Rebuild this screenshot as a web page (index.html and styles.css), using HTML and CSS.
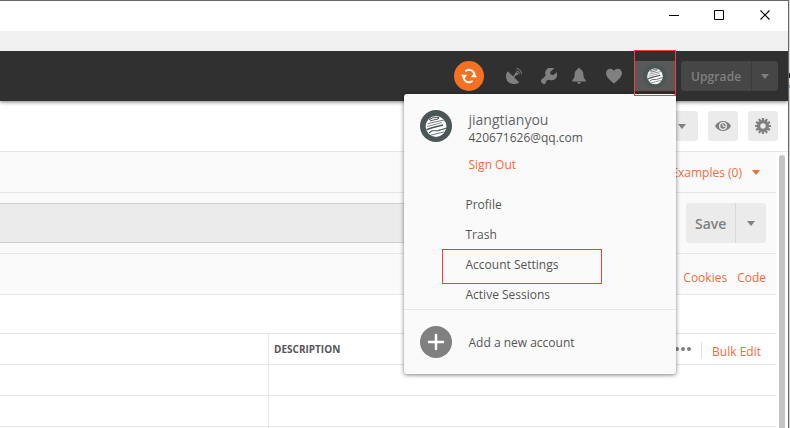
FILE: index.html
```html
<!DOCTYPE html>
<html lang="en">
<head>
<meta charset="utf-8">
<title>Account menu</title>
<link rel="stylesheet" href="styles.css">
</head>
<body>
<svg class="defs" aria-hidden="true">
  <symbol id="globe" viewBox="0 0 32 32">
    <circle cx="16" cy="16" r="16" fill="#4b5756"/>
    <circle cx="16" cy="16.5" r="10.4" fill="#fff"/>
    <g fill="none" stroke="#4b5756">
      <path d="M9 9.800 13 7.700 19 7.500 18 9 10 10.800" stroke-width="1"/>
      <path d="M7.500 13.600 24 10" stroke-width=".8"/>
      <path d="M6.500 19.800 12 17.800 23 15" stroke-width="1.600"/>
      <path d="M9 23 12 20.800 18 20.600 26 18.200" stroke-width="1.100"/>
      <path d="M11 25 24 22" stroke-width=".8"/>
      <path d="M7 16.500 22 12.500" stroke-width=".7"/>
    </g>
  </symbol>
</svg>
<div class="window">
  <div class="titlebar">
    <svg width="11" height="11"><path d="M0 5.500h10" stroke="#000"/></svg>
    <svg width="11" height="11"><path d="M.5.5h9v9h-9z" fill="none" stroke="#000"/></svg>
    <svg width="11" height="11"><path d="M.5.5l9 9M9.500.5l-9 9" stroke="#000" stroke-width="1.100"/></svg>
  </div>
  <div class="menubar"></div>
  <header class="header">
    <span class="sync">
      <svg width="16" height="16" viewBox="0 0 16 16"><g fill="none" stroke="#fff" stroke-width="1.900"><path d="M4.300 3.200A6 6 0 0 1 11.600 3.100M13.300 6 13 9"/><path d="M11.700 12.800A6 6 0 0 1 4.400 12.900M2.700 10 3 7"/><path d="M11.400 3A6 6 0 0 1 13.600 6.500M4.600 13A6 6 0 0 1 2.400 9.500"/></g><path d="M9.800 9.200h6.200l-3-4.200zM0 6.800h6.200l-3.200 4.200z" fill="#fff"/></svg>
    </span>
    <svg class="icon dish" width="16" height="16" viewBox="0 0 16 16"><path d="M1.700 3.200 13.300 14.400C8.500 17.200 3 16 1 12.600-.5 9.500-.2 5.800 1.700 3.200z" fill="#808080"/><path d="M7 9.500 10.500 5.600" stroke="#808080" stroke-width="1.500"/><circle cx="10.500" cy="5.700" r="1.500" fill="#808080"/><path d="M10.300 2.900a3 3 0 0 1 3 3.300M10.500.6a5 5 0 0 1 4.900 5.500" fill="none" stroke="#808080" stroke-width="1"/></svg>
    <svg class="icon wrench" width="16" height="16" viewBox="0 0 16 16"><path d="M13.200.6A5.600 5.600 0 0 0 4.800 7.500L.6 11.400a2 2 0 0 0 0 3l1 1a2 2 0 0 0 2.900 0l1-2.800 2.700-.9A5.600 5.600 0 0 0 15.700 4.300l-3.200 2.700-2.800-.5-.6-2.500z" fill="#808080"/></svg>
    <svg class="icon bell" width="14" height="16" viewBox="0 0 14 16"><path d="M7 0c1 0 1.300.6 1.300 1.300C10.500 2 11.300 4 11.400 6.500c.1 3 .8 4.400 2.300 5.500v1.500H.3V12c1.500-1.100 2.200-2.500 2.300-5.500C2.700 4 3.500 2 5.700 1.300 5.700.6 6 0 7 0zM5.300 14h3.400c0 2.500-3.400 2.500-3.400 0z" fill="#808080"/></svg>
    <svg class="icon heart" width="16" height="16" viewBox="0 0 16 16"><path d="M8 15.500C4 11.900 0 8.800 0 5.200 0 .6 5.700-.7 8 3c2.300-3.700 8-2.400 8 2.200 0 3.600-4 6.700-8 10.300z" fill="#808080"/></svg>
    <span class="avatar-button"><svg width="24" height="24"><use href="#globe"/></svg></span>
    <span class="upgrade"><span class="upgrade-label">Upgrade</span><span class="upgrade-more"><i class="caret"></i></span></span>
  </header>
  <div class="body">
    <div class="toolbar">
      <span class="tool select"><i class="caret"></i></span>
      <span class="tool"><svg width="16" height="12" viewBox="0 0 16 12"><path d="M0 6C3.500-.8 12.500-.8 16 6 12.500 12.800 3.500 12.800 0 6z" fill="#808080"/><circle cx="8" cy="6" r="4" fill="#ebebeb"/><circle cx="8" cy="6" r="2.700" fill="#808080"/><path d="M8 3.600v2.800h2.400" fill="none" stroke="#ebebeb" stroke-width="1"/></svg></span>
      <span class="tool"><svg width="16" height="16" viewBox="-8 -8 16 16"><circle r="4.400" fill="none" stroke="#808080" stroke-width="3.400"/><g stroke="#808080" stroke-width="2.200"><path d="M0-8v3M0 8V5M-8 0h3M8 0H5"/><path d="M0-8v3M0 8V5M-8 0h3M8 0H5" transform="rotate(30)"/><path d="M0-8v3M0 8V5M-8 0h3M8 0H5" transform="rotate(60)"/></g></svg></span>
    </div>
    <div class="content">
      <div class="row examples orange"><span>Examples (0)</span><i class="caret"></i></div>
      <div class="row request"><div class="url"></div><div class="save"><span class="save-label">Save</span><span class="save-more"><i class="caret"></i></span></div></div>
      <div class="row links orange"><span>Cookies</span><span>Code</span></div>
      <div class="gap"></div>
      <div class="table">
        <div class="cell"></div>
        <div class="cell heading"><span class="description">DESCRIPTION</span><span class="dots"><i></i><i></i><i></i></span><span class="bulk orange">Bulk Edit</span></div>
        <div class="cell"></div><div class="cell"></div>
        <div class="cell"></div><div class="cell"></div>
        <div class="cell"></div><div class="cell"></div>
      </div>
    </div>
    <div class="scrollbar"></div>
  </div>
</div>
<div class="popup">
  <div class="account">
    <svg width="32" height="32"><use href="#globe"/></svg>
    <div class="details"><div class="name">jiangtianyou</div><div class="email">420671626@qq.com</div><div class="signout orange">Sign Out</div></div>
  </div>
  <div class="items"><div class="profile">Profile</div><div class="trash">Trash</div><div class="settings">Account Settings</div><div class="sessions">Active Sessions</div></div>
  <div class="add"><svg width="32" height="32"><circle cx="16" cy="16" r="16" fill="#808080"/><path d="M16 9v14M9 16h14" stroke="#fff" stroke-width="2.500" stroke-linecap="round"/></svg><span class="add-label">Add a new account</span></div>
</div>
<div class="mark mark-avatar"></div>
<div class="mark mark-settings"></div>
</body>
</html>
```
FILE: styles.css
```css
* { box-sizing: border-box; }
body {
  margin: 0;
  width: 790px;
  height: 428px;
  overflow: hidden;
  position: relative;
  background: linear-gradient(#d8d8d8 73px, #222 73px, #222 78px, #d8d8d8 78px, #d8d8d8 85px, #8c90a8 85px, #8c90a8 88px, #d0d0d0 88px);
  font: 12px/18px "Open Sans", "Noto Sans", sans-serif;
  color: #555;
}
svg { display: block; flex: none; }
.defs { position: absolute; width: 0; height: 0; }
.orange { color: #f26b3a; }

.window {
  isolation: isolate;
  width: 789px;
  height: 428px;
  display: flex;
  flex-direction: column;
  overflow: hidden;
  background: #fff;
  border-top: 1px solid #686868;
  border-right: 1px solid #686868;
}
.titlebar {
  flex: none;
  height: 30px;
  display: flex;
  justify-content: flex-end;
  align-items: center;
  gap: 34px;
  padding: 0 17px 2px 0;
}
.titlebar svg:nth-child(2) { margin-right: 1px; }
.menubar { flex: none; height: 20px; background: #f0f0f0; position: relative; z-index: 1; }

.header {
  flex: none;
  height: 50px;
  display: flex;
  align-items: center;
  padding-left: 454px;
  background: #303030;
  position: relative;
  box-shadow: 0 1px 4px rgba(0, 0, 0, .55);
}
.sync {
  width: 30px;
  height: 30px;
  border-radius: 50%;
  background: #f47023;
  display: flex;
  align-items: center;
  justify-content: center;
}
.dish { margin-left: 22px; }
.wrench { margin-left: 19px; }
.bell { margin-left: 15px; }
.heart { margin-left: 20px; }
.avatar-button {
  width: 40px;
  height: 30px;
  margin-left: 13px;
  padding-right: 1px;
  background: #595959;
  display: flex;
  align-items: center;
  justify-content: center;
}
.upgrade {
  display: flex;
  width: 97px;
  height: 30px;
  margin-left: 6px;
  border-radius: 3px;
  background: #464646;
  color: #808080;
  font-weight: 600;
}
.upgrade-label {
  width: 71px;
  padding-left: 10px;
  line-height: 31px;
  border-right: 1px solid #3b3b3b;
  letter-spacing: .1px;
}
.upgrade-more { flex: 1; display: flex; align-items: center; justify-content: center; }
.caret {
  flex: none;
  width: 0;
  height: 0;
  border: 4px solid transparent;
  border-top: 5px solid currentColor;
  border-bottom: 0;
}

.body {
  height: 327px;
  display: grid;
  grid-template: 51px 1fr / 776px 1fr;
}
.toolbar {
  grid-column: 1 / 3;
  display: flex;
  justify-content: flex-end;
  gap: 10px;
  padding: 10px 10px 0 0;
  border-bottom: 1px solid #e6e6e6;
}
.tool {
  width: 30px;
  height: 30px;
  border-radius: 3px;
  background: #ebebeb;
  color: #808080;
  display: flex;
  align-items: center;
  justify-content: center;
}
.select { width: 120px; justify-content: flex-end; padding-right: 12px; }
.scrollbar {
  width: 6px;
  height: 300px;
  margin: 3px 0 0 3px;
  border-radius: 3px;
  background: #c4c4c4;
}
.row {
  display: flex;
  background: #fafafa;
  border-bottom: 1px solid #e6e6e6;
}
.examples {
  height: 41px;
  align-items: center;
  justify-content: flex-end;
  gap: 10px;
  padding: 1px 16px 0 0;
}
.request { height: 61px; padding: 10px 10px 0 0; gap: 10px; }
.url {
  flex: 1;
  height: 40px;
  background: #ebebeb;
  border: 1px solid #d0d0d0;
  border-left: 0;
}
.save {
  display: flex;
  width: 80px;
  height: 40px;
  border-radius: 3px;
  background: #ebebeb;
  color: #808080;
  font-size: 14px;
  font-weight: 600;
}
.save-label { width: 50px; padding-left: 9px; line-height: 41px; border-right: 1px solid #d8d8d8; }
.save-more { flex: 1; display: flex; align-items: center; justify-content: center; }
.links { height: 41px; align-items: center; justify-content: flex-end; gap: 10px; padding: 7px 10px 0 0; }
.gap { height: 38px; }
.table {
  display: grid;
  grid-template-columns: 269px 1fr;
  grid-auto-rows: 31px;
  border-top: 1px solid #e6e6e6;
}
.cell { border-bottom: 1px solid #e6e6e6; }
.cell:nth-child(odd) { border-right: 1px solid #e6e6e6; }
.heading { display: flex; align-items: center; padding: 0 15px 0 5px; }
.description { flex: 1; font-size: 10px; font-weight: 700; }
.dots { display: flex; gap: 2px; margin-right: 10px; }
.dots i { width: 4px; height: 4px; border-radius: 50%; background: #808080; }
.bulk { height: 17px; margin-top: 2px; padding-left: 10px; line-height: 19px; border-left: 1px solid #dedede; }

.popup {
  position: absolute;
  left: 404px;
  top: 94px;
  width: 272px;
  height: 280px;
  display: flex;
  flex-direction: column;
  border-radius: 3px;
  background: #fafafa;
  box-shadow: 0 1px 4px rgba(0, 0, 0, .5);
}
.account { height: 95px; display: flex; gap: 16.5px; padding: 16px 16px 0; }
.name { font-size: 14px; line-height: 20px; color: #666; }
.email { line-height: 16px; }
.signout { margin-top: 10px; }
.items { height: 121px; padding: 1px 0 0 61.5px; line-height: 30px; border-bottom: 1px solid #e6e6e6; }
.add { flex: 1; display: flex; align-items: center; gap: 16.5px; padding-left: 16px; }
.add-label { padding-top: 2px; }

.mark { position: absolute; border: 1px solid #f73a3a; }
.mark-avatar { left: 634px; top: 50px; width: 42px; height: 46px; }
.mark-settings { left: 442px; top: 249px; width: 160px; height: 35px; }
```
